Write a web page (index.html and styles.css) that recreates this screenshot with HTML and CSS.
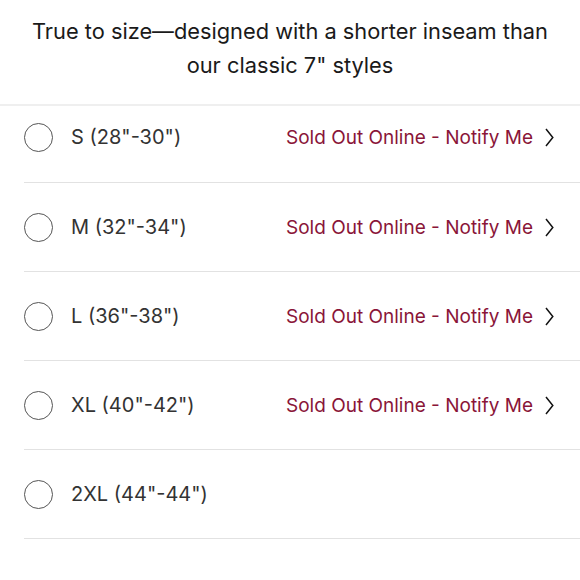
FILE: index.html
```html
<!DOCTYPE html>
<html>
<head>
<meta charset="utf-8">
<link rel="stylesheet" href="styles.css">
</head>
<body>
<div class="page">
  <p class="intro">True to size—designed with a shorter inseam than our classic 7" styles</p>
  <ul class="sizes">
    <li class="row first">
      <span class="radio"></span>
      <span class="label">S (28"-30")</span>
      <span class="notify">Sold Out Online - Notify Me</span>
      <svg class="chev" width="10" height="19" viewBox="0 0 10 19"><path d="M2 1 L8.8 9.5 L2 18" fill="none" stroke="#111" stroke-width="1.5"/></svg>
    </li>
    <li class="row">
      <span class="radio"></span>
      <span class="label">M (32"-34")</span>
      <span class="notify">Sold Out Online - Notify Me</span>
      <svg class="chev" width="10" height="19" viewBox="0 0 10 19"><path d="M2 1 L8.8 9.5 L2 18" fill="none" stroke="#111" stroke-width="1.5"/></svg>
    </li>
    <li class="row">
      <span class="radio"></span>
      <span class="label">L (36"-38")</span>
      <span class="notify">Sold Out Online - Notify Me</span>
      <svg class="chev" width="10" height="19" viewBox="0 0 10 19"><path d="M2 1 L8.8 9.5 L2 18" fill="none" stroke="#111" stroke-width="1.5"/></svg>
    </li>
    <li class="row">
      <span class="radio"></span>
      <span class="label">XL (40"-42")</span>
      <span class="notify">Sold Out Online - Notify Me</span>
      <svg class="chev" width="10" height="19" viewBox="0 0 10 19"><path d="M2 1 L8.8 9.5 L2 18" fill="none" stroke="#111" stroke-width="1.5"/></svg>
    </li>
    <li class="row">
      <span class="radio"></span>
      <span class="label">2XL (44"-44")</span>
    </li>
  </ul>
</div>
</body>
</html>
```
FILE: styles.css
```css
html, body {
  margin: 0;
  padding: 0;
  background: #fff;
}
body {
  font-family: "Inter", "Liberation Sans", sans-serif;
  color: #222;
}
.page {
  width: 580px;
}
.intro {
  margin: 0;
  padding: 14px 20px 0;
  height: 106px;
  box-sizing: border-box;
  text-align: center;
  font-size: 21.8px;
  line-height: 34px;
  color: #1a1a1a;
  border-bottom: 2px solid #efefef;
}
.sizes {
  list-style: none;
  margin: 0;
  padding: 0 0 0 24px;
}
.row {
  display: flex;
  align-items: center;
  height: 88px;
  border-bottom: 1px solid #e2e2e2;
  padding-right: 26px;
}
.row.first {
  height: 62px;
  padding-bottom: 14px;
}
.radio {
  width: 27px;
  height: 27px;
  border: 1.5px solid #555;
  border-radius: 50%;
  flex: none;
}
.label {
  margin-left: 18px;
  font-size: 20px;
  color: #333;
  flex: 1;
}
.notify {
  font-size: 19px;
  color: #8a1538;
}
.chev {
  margin-left: 11px;
  flex: none;
}
```
